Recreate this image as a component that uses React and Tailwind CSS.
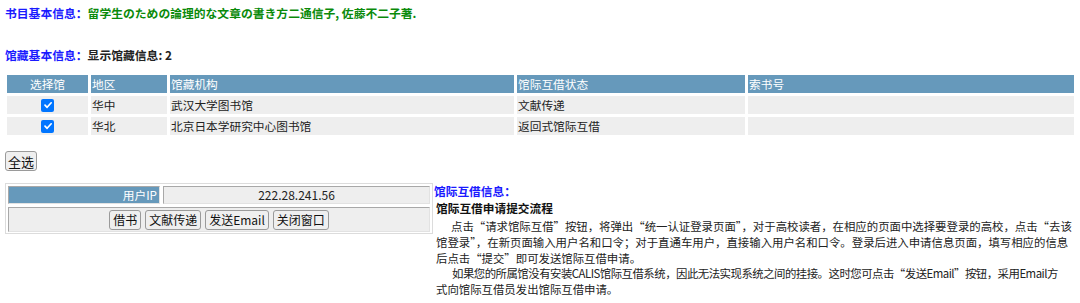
import React from "react";

const headCell = "bg-[#6699bb] text-white h-[18px] flex items-center px-[1px] leading-none";
const bodyCell = "bg-[#eeeeee] h-[18px] flex items-center px-[1px] leading-none";
const btn = "h-[20px] border border-[#9a9a9a] rounded-[3px] bg-[#efefef] leading-none text-[#111] flex items-center";
const insetCell = "border border-t-[#a8a8a8] border-l-[#a8a8a8] border-r-[#e2e2e2] border-b-[#e2e2e2]";

function Check() {
  return (
    <span className="w-[13px] h-[13px] rounded-[2px] bg-[#0075ff] flex items-center justify-center">
      <svg width="10" height="10" viewBox="0 0 10 10">
        <path d="M2 5.2 L4.1 7.3 L8.2 2.8" fill="none" stroke="white" strokeWidth="1.7" strokeLinecap="round" strokeLinejoin="round" />
      </svg>
    </span>
  );
}

export default function App() {
  const rows = [
    ["华中", "武汉大学图书馆", "文献传递"],
    ["华北", "北京日本学研究中心图书馆", "返回式馆际互借"],
  ];
  return (
    <div className="w-[1080px] h-[303px] bg-white text-[11.7px] text-[#222] font-['Noto_Sans_CJK_SC','Noto_Sans',sans-serif] overflow-hidden">
      <div className="pt-[5px] pl-[5px] leading-[16px] font-bold whitespace-nowrap text-[11.8px]">
        <span className="text-[#1a1aff]">书目基本信息：</span>
        <span className="text-[#0a8a0a]">留学生のための論理的な文章の書き方二通信子, 佐藤不二子著.</span>
      </div>
      <div className="mt-[26px] pl-[5px] leading-[16px] font-bold whitespace-nowrap text-[11.8px]">
        <span className="text-[#1a1aff]">馆藏基本信息：</span>
        <span className="text-[#222]">显示馆藏信息: 2</span>
      </div>

      <div className="mt-[12px] ml-[7px] w-[1067px] grid grid-cols-[81px_76px_344px_228px_1fr] gap-[3px]">
        <div className={headCell + " justify-center"}>选择馆</div>
        <div className={headCell}>地区</div>
        <div className={headCell}>馆藏机构</div>
        <div className={headCell}>馆际互借状态</div>
        <div className={headCell}>索书号</div>
        {rows.map((r, i) => (
          <React.Fragment key={i}>
            <div className={bodyCell + " justify-center"}>
              <Check />
            </div>
            <div className={bodyCell}>{r[0]}</div>
            <div className={bodyCell}>{r[1]}</div>
            <div className={bodyCell}>{r[2]}</div>
            <div className={bodyCell}></div>
          </React.Fragment>
        ))}
      </div>

      <div className="mt-[16px] ml-[5px]">
        <button className={btn + " px-[2px] text-[13px]"}>全选</button>
      </div>

      <div className="mt-[12px] flex items-start">
        <div className="shrink-0 ml-[5px] w-[428px] border border-[#dcdcdc] px-[2px] pt-[2px] pb-[1px] flex flex-col gap-[3px]">
          <div className="grid grid-cols-[152px_1fr] gap-[3px]">
            <div className={"h-[18px] bg-[#6699bb] text-white flex items-center justify-end pr-[2px] leading-none " + insetCell}>用户IP</div>
            <div className={"h-[18px] bg-[#eeeeee] flex items-center justify-center leading-none text-[12px] text-[#222] " + insetCell}>222.28.241.56</div>
          </div>
          <div className={"h-[25px] bg-[#eeeeee] flex items-center justify-center gap-[4px] " + insetCell}>
            <button className={btn + " px-[3px] text-[12px]"}>借书</button>
            <button className={btn + " px-[3px] text-[12px]"}>文献传递</button>
            <button className={btn + " px-[3px] text-[12px]"}>发送Email</button>
            <button className={btn + " px-[3px] text-[12px]"}>关闭窗口</button>
          </div>
        </div>
        <div className="ml-[1px] flex-1 min-w-0">
          <div className="leading-[15px] font-bold text-[#1a1aff]">馆际互借信息：</div>
          <div className="mt-[2px] pl-[2px] leading-[16px] font-bold text-[#111]">馆际互借申请提交流程</div>
          <div className="mt-[3px] pl-[2px] leading-[15.75px] text-[11.4px] text-[#222] whitespace-nowrap">
            <div className="indent-[15px]">
              点击“请求馆际互借”按钮，将弹出“统一认证登录页面”，对于高校读者，在相应的页面中选择要登录的高校，点击“去该
              <br />
              馆登录”，在新页面输入用户名和口令；对于直通车用户，直接输入用户名和口令。登录后进入申请信息页面，填写相应的信息
              <br />
              后点击“提交”即可发送馆际互借申请。
            </div>
            <div className="indent-[16px]">
              <span className="tracking-[-0.5px]">
                如果您的所属馆没有安装CALIS馆际互借系统，因此无法实现系统之间的挂接。这时您可点击“发送Email”按钮，采用Email方
              </span>
              <br />
              式向馆际互借员发出馆际互借申请。
            </div>
          </div>
        </div>
      </div>
    </div>
  );
}
